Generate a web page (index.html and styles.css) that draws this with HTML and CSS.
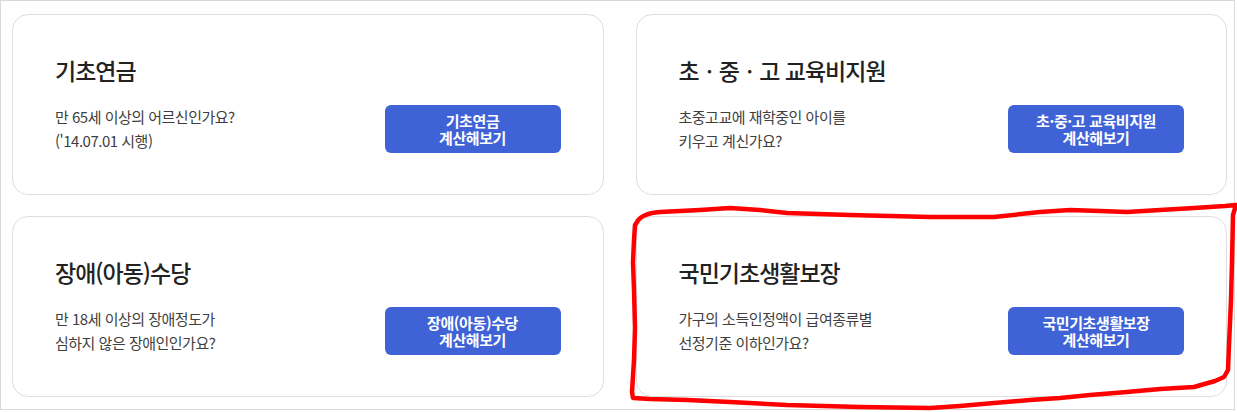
FILE: index.html
```html
<!DOCTYPE html>
<html lang="ko">
<head>
    <meta charset="UTF-8">
    <meta name="viewport" content="width=device-width, initial-scale=1.0">
    <title>복지 계산기</title>
    <link rel="stylesheet" href="styles.css">
</head>
<body>
    <main class="frame">
        <section class="card">
            <h2 class="card-title">기초연금</h2>
            <div class="card-row">
                <p class="card-desc">만 65세 이상의 어르신인가요?<br>('14.07.01 시행)</p>
                <button type="button" class="calc-btn">기초연금<br>계산해보기</button>
            </div>
        </section>

        <section class="card">
            <h2 class="card-title">초ㆍ중ㆍ고 교육비지원</h2>
            <div class="card-row">
                <p class="card-desc">초중고교에 재학중인 아이를<br>키우고 계신가요?</p>
                <button type="button" class="calc-btn">초·중·고 교육비지원<br>계산해보기</button>
            </div>
        </section>

        <section class="card">
            <h2 class="card-title">장애(아동)수당</h2>
            <div class="card-row">
                <p class="card-desc">만 18세 이상의 장애정도가<br>심하지 않은 장애인인가요?</p>
                <button type="button" class="calc-btn">장애(아동)수당<br>계산해보기</button>
            </div>
        </section>

        <section class="card">
            <h2 class="card-title">국민기초생활보장</h2>
            <div class="card-row">
                <p class="card-desc">가구의 소득인정액이 급여종류별<br>선정기준 이하인가요?</p>
                <button type="button" class="calc-btn">국민기초생활보장<br>계산해보기</button>
            </div>
        </section>
    </main>

    <!-- red marker drawn over the last card -->
    <svg class="marker" width="1237" height="412" viewBox="0 0 1237 412">
        <path d="M637,222 C640,216 648,213 660,212 L700,210 730,208 760,210 787,213 850,215 930,217 994,217 1040,212 1070,210 1100,211 1127,212 1160,210 1194,208 1225,206 1236,205 L1233,215 1232,262 1231,300 1229,345 1228,370 1224,377 1215,381 1194,387 1160,389 1127,392 1090,395 1060,398 1030,400 994,403 960,406 930,408 860,407 787,405 730,402 687,400 650,399 633,398 632,392 634,360 635,328 634,290 633,262 634,240 635,225 Z"/>
    </svg>
</body>
</html>
```

FILE: styles.css
```css
body {
    margin: 0;
    padding: 0;
    background-color: #fff;
    font-family: "Noto Sans CJK KR", "Noto Sans", sans-serif;
}
.frame {
    box-sizing: border-box;
    width: 1235px;
    height: 410px;
    border: 1px solid #d9d9d9;
    padding: 13px 7px 12px 11px;
    display: grid;
    grid-template-columns: 1fr 1fr;
    grid-template-rows: 1fr 1fr;
    gap: 21px 32px;
}
.card {
    box-sizing: border-box;
    border: 1px solid #dedede;
    border-radius: 16px;
    padding: 39px 42px 0 42px;
    background: #fff;
}
.card-title {
    margin: 0;
    font-size: 23px;
    line-height: 32px;
    font-weight: 500;
    color: #222;
    letter-spacing: -1px;
}
.card-row {
    margin-top: 19px;
    display: flex;
    align-items: center;
    justify-content: space-between;
}
.card-desc {
    margin: 0;
    font-size: 15px;
    line-height: 24px;
    color: #3f3f3f;
    letter-spacing: -0.5px;
}
.calc-btn {
    width: 176px;
    height: 48px;
    padding: 0;
    border: none;
    border-radius: 6px;
    background-color: #3f62d6;
    color: #fff;
    font-family: inherit;
    font-size: 15px;
    font-weight: 700;
    line-height: 17px;
    letter-spacing: -0.4px;
    cursor: pointer;
}
.marker {
    position: absolute;
    left: 0;
    top: 0;
    pointer-events: none;
}
.marker path {
    fill: none;
    stroke: #f00;
    stroke-width: 4.5;
    stroke-linejoin: round;
    stroke-linecap: round;
}
```
